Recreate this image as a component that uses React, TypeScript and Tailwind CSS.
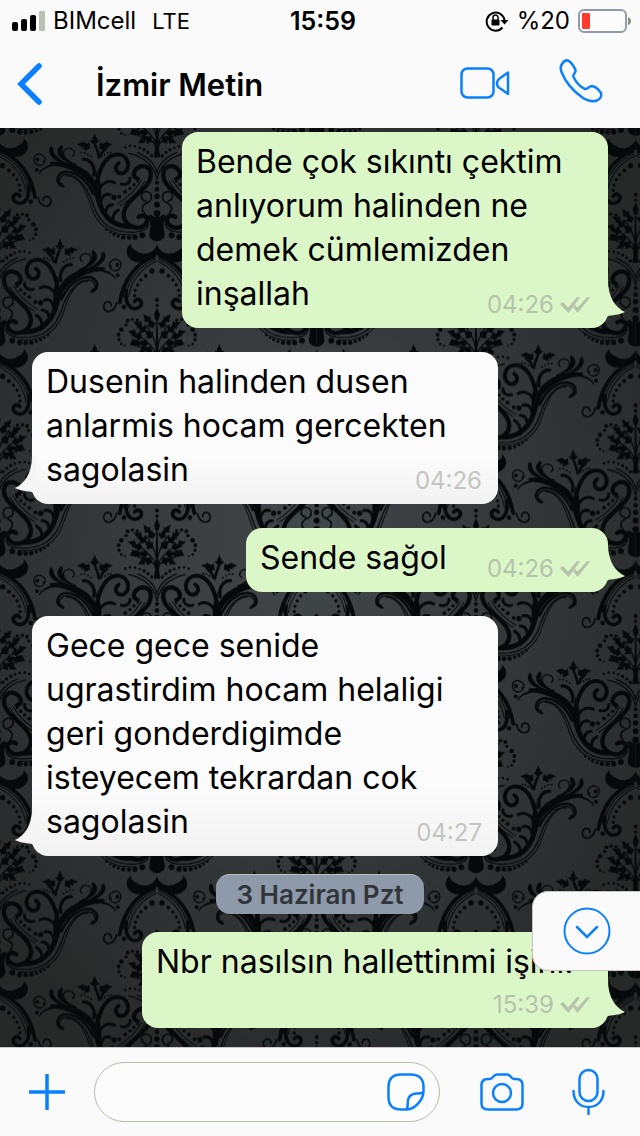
import React from 'react';
import clsx from 'clsx';

interface Message {
  id: number;
  lines: string[];
  time: string;
  mine: boolean;
  size: string;
}

const messages: Message[] = [
  {
    id: 1,
    lines: ['Bende çok sıkıntı çektim', 'anlıyorum halinden ne', 'demek cümlemizden', 'inşallah'],
    time: '04:26',
    mine: true,
    size: 'w-[426px] pb-3',
  },
  {
    id: 2,
    lines: ['Dusenin halinden dusen', 'anlarmis hocam gercekten', 'sagolasin'],
    time: '04:26',
    mine: false,
    size: 'w-[466px] pb-3',
  },
  { id: 3, lines: ['Sende sağol'], time: '04:26', mine: true, size: 'w-[362px] pb-3' },
  {
    id: 4,
    lines: ['Gece gece senide', 'ugrastirdim hocam helaligi', 'geri gonderdigimde', 'isteyecem tekrardan cok', 'sagolasin'],
    time: '04:27',
    mine: false,
    size: 'w-[466px] pb-3',
  },
];

const latest: Message = {
  id: 5,
  lines: ['Nbr nasılsın hallettinmi işini.'],
  time: '15:39',
  mine: true,
  size: 'w-[466px] pb-11',
};

// [x, y, radius] of the beads on the left half of the damask motif
const beads = [
  [376, 82, 4], [390, 78, 4], [405, 79, 4], [419, 83, 4], [432, 89, 5], [444, 97, 5], [455, 107, 5],
  [342, 232, 8], [358, 230, 6], [376, 216, 6], [390, 205, 5], [402, 194, 5], [413, 184, 4],
  [320, 329, 4], [331, 337, 4], [342, 343, 5], [355, 348, 5], [370, 352, 7], [387, 353, 7], [405, 352, 8], [427, 346, 9],
  [111, 150, 6], [112, 118, 6], [372, 561, 7],
  [456, 453, 8], [437, 467, 6], [423, 480, 5], [413, 495, 5], [406, 511, 5], [404, 527, 5],
  [412, 600, 5], [397, 598, 5], [383, 602, 6], [378, 615, 5], [364, 629, 7], [356, 644, 6], [357, 659, 5], [364, 672, 4], [375, 677, 3],
  [244, 98, 3], [254, 99, 3], [264, 103, 3], [273, 109, 3], [314, 104, 3], [323, 99, 3], [332, 97, 3],
];

// [x, y, angle, scale] of the foliage sprigs
const sprigs = [
  [284, 72, 0, 0.9], [268, 84, -58, 0.9], [300, 84, 58, 0.9], [255, 76, -80, 0.7], [314, 76, 80, 0.7],
  [458, 622, -22, 0.9], [447, 604, -38, 0.8], [436, 634, -52, 0.9], [424, 618, -62, 0.8],
  [455, 652, -42, 0.9], [425, 650, -82, 0.9], [407, 640, -75, 0.7], [442, 672, -78, 0.9],
  [420, 668, -108, 0.8], [408, 662, -125, 0.7], [455, 694, -68, 0.9], [434, 690, -120, 0.7],
];

function MotifHalf() {
  return (
    <>
      {beads.map(([x, y, r]) => (
        <circle key={`${x}-${y}`} cx={x} cy={y} r={r} fill="#050909" />
      ))}
      {sprigs.map(([x, y, angle, scale]) => (
        <path
          key={`${x}-${y}`}
          transform={`translate(${x} ${y}) rotate(${angle}) scale(${scale})`}
          fill="#050909"
          d="M0 4C-3 -3 -13 -2 -16 -14C-10 -11 -6 -12 -8 -21C-4 -22 -3 -29 0 -36C3 -29 4 -22 8 -21C6 -12 10 -11 16 -14C13 -2 3 -3 0 4Z"
        />
      ))}
      <g fill="none" stroke="#050909" strokeLinecap="round">
        {/* stems */}
        <path strokeWidth="4" d="M469 706C462 680 440 662 420 650M469 680C462 650 450 630 436 616M466 704C450 690 436 682 420 680" />
        <path strokeWidth="8" d="M297 112C296 98 290 88 286 76M303 108C304 96 312 90 318 86" />
        {/* inner S scroll */}
        <path strokeWidth="13" d="M413 176C392 170 402 143 427 138C456 138 459 170 441 194C420 222 372 246 371 285C373 327 434 336 442 302C443 287 426 283 416 291" />
        <path strokeWidth="3" d="M352 252C378 236 410 208 424 180M360 258C388 240 420 212 434 184" />
        <path strokeWidth="5" d="M438 244C418 238 422 214 440 215C460 218 458 242 442 248C422 258 424 270 434 280" />
        {/* outer scroll */}
        <path strokeWidth="12" d="M286 210C295 160 308 112 345 104C384 98 397 144 371 159C350 165 339 141 356 130" />
        <path strokeWidth="10" d="M282 166C286 138 272 118 250 118" />
        <path strokeWidth="9" d="M297 208C310 184 328 180 344 188M302 252C304 226 318 220 330 224M316 284C317 262 326 254 338 254M338 310C336 288 344 276 355 270M364 192C382 196 392 184 390 174" />
        {/* trunk and its trailing lines */}
        <path strokeWidth="15" d="M276 186C292 208 290 240 308 272C326 304 352 320 392 320" />
        <path strokeWidth="4" d="M188 192C178 194 172 176 190 165C232 157 263 204 278 250C298 312 338 341 410 336C430 334 444 326 446 312" />
        <path strokeWidth="3" d="M200 168C240 168 258 214 272 256C290 318 334 349 408 344" />
        <path strokeWidth="8" d="M190 199C164 194 166 158 200 155C238 158 262 184 280 222" />
        {/* feathered arm */}
        <path strokeWidth="4" d="M216 134C180 130 148 134 122 152M174 137C150 132 134 138 118 160M134 126C142 108 118 96 106 106C96 118 104 138 122 136C132 134 134 128 130 122" />
        <path strokeWidth="4" d="M228 134C190 122 178 90 204 84C222 84 228 100 218 108" />
        {/* fine rays above the stem */}
        <path strokeWidth="4" d="M471 178C463 142 442 112 386 100M471 158C464 130 446 112 412 98" />
        {/* arch */}
        <path strokeWidth="11" d="M462 410C410 428 370 478 359 548" />
        <path strokeWidth="3" d="M466 418C410 440 384 486 378 528M468 424C412 452 392 494 386 530M440 424C400 446 376 490 370 530" />
        <path strokeWidth="11" d="M379 512C372 560 402 578 422 558C430 542 414 532 404 544" />
        <path strokeWidth="5" d="M350 548C342 582 312 580 311 560C313 540 334 542 334 558" />
      </g>
      <g fill="#050909">
        <path d="M150 126C190 118 240 134 268 160C284 176 296 200 300 232L286 226C276 190 240 146 150 134Z" />
        <path d="M152 78C138 102 158 126 212 134C176 118 158 104 160 84Z" />
        <path d="M184 74C160 92 172 120 226 136C196 116 180 100 190 80Z" />
        <path d="M471 372C464 400 430 408 412 394C390 384 388 372 400 368C376 376 372 410 398 422C420 436 450 418 471 404Z" />
        <path d="M471 290H462C448 278 442 284 448 300C458 324 440 342 452 356Q460 364 471 364Z" />
        <path d="M290 150Q312 200 300 250L282 220Z" />
      </g>
    </>
  );
}

function Wallpaper() {
  const copies = [[0, 0], [0, -632], [-478, 316], [-478, -316], [479, 316], [479, -316]];

  return (
    <svg className="absolute inset-0 h-full w-full" aria-hidden="true">
      <defs>
        <radialGradient id="glow" cx="0.48" cy="0.46" r="0.62">
          <stop offset="0" stopColor="#42474a" />
          <stop offset="0.55" stopColor="#343738" />
          <stop offset="1" stopColor="#272929" />
        </radialGradient>
        <g id="half">
          <MotifHalf />
        </g>
        <g id="motif">
          <use href="#half" />
          <use href="#half" transform="translate(942 0) scale(-1 1)" />
          <g fill="#050909">
            <circle cx="471" cy="188" r="6" />
            <circle cx="471" cy="208" r="7" />
            <circle cx="471" cy="229" r="8" />
            <circle cx="471" cy="254" r="9" />
            <circle cx="471" cy="280" r="10" />
            <circle cx="471" cy="540" r="6" />
            <circle cx="471" cy="556" r="5" />
            <path d="M471 562L480 584L476 600H466L462 584Z" />
            <path d="M469 600H473L475 690L480 700L477 718L481 744H461L465 718L462 700L467 690Z" />
          </g>
        </g>
        <pattern id="damask" width="957" height="632" patternUnits="userSpaceOnUse" patternTransform="translate(0 -8) scale(0.3333)">
          {copies.map(([x, y]) => (
            <use key={`${x}/${y}`} href="#motif" x={x} y={y} />
          ))}
        </pattern>
      </defs>
      <rect width="100%" height="100%" fill="url(#glow)" />
      <rect width="100%" height="100%" fill="url(#damask)" />
    </svg>
  );
}

function Bubble({ message }: { message: Message }) {
  const { lines, time, mine, size } = message;

  return (
    <div
      className={clsx(
        'relative rounded-2xl px-[14px] pt-2',
        size,
        mine ? 'self-end bg-[#dcf7c7]' : 'self-start bg-linear-to-b from-[#fbfbfb] from-70% to-[#f2f2f2]'
      )}
    >
      {lines.map((line) => (
        <p key={line} className="w-fit whitespace-nowrap text-[32px] leading-[44px] text-black">
          {line}
        </p>
      ))}
      <div className={clsx('absolute bottom-2 flex items-center gap-[6px]', mine ? 'right-[18px] text-[#b6c3ac]' : 'right-4 text-[#c3c6c0]')}>
        <time className="text-2xl leading-[30px]">{time}</time>
        {mine && (
          <svg className="h-[18px] w-[30px]" viewBox="0 0 30 18" fill="currentColor" aria-label="Okundu">
            <path d="M0 8L3 6L8 11.500L17 1L20 1.500L8.500 17Z" />
            <path d="M13 11L15 9L17.500 11.500L27 1L30 1.500L17.500 17Z" />
          </svg>
        )}
      </div>
      <svg
        className={clsx('absolute bottom-2 h-10 w-[22px]', mine ? '-right-[18px]' : '-left-[18px] -scale-x-100')}
        viewBox="0 0 22 40"
        fill={mine ? '#dcf7c7' : '#f5f5f5'}
        aria-hidden="true"
      >
        <path d="M0 0H4C4 18 12 28 21 32C17 34 12 35 4 36L2 38L0 36Z" />
      </svg>
    </div>
  );
}

function StatusBar() {
  return (
    <div className="grid h-10 grid-cols-[1fr_auto_1fr] items-center pl-[14px] pr-2 pt-[1px] text-2xl leading-10">
      <div className="-ml-[2px] flex items-center gap-2">
        <svg className="h-5 w-[33px]" viewBox="0 0 33 20" aria-hidden="true">
          <rect y="11" width="6" height="9" rx="2" />
          <rect x="9" y="8" width="6" height="12" rx="2" />
          <rect x="18" y="4" width="6" height="16" rx="2" />
          <rect x="27" width="6" height="20" rx="1" fill="#b9c0b4" />
        </svg>
        <span>BIMcell</span>
        <span className="ml-2 text-[22px]">LTE</span>
      </div>
      <time className="text-[25px] font-semibold">15:59</time>
      <div className="flex items-center justify-end gap-2">
        <svg className="h-[22px] w-6" viewBox="0 0 24 22" aria-hidden="true">
          <path d="M17.500 17.500A9 9 0 1 1 19.500 10" fill="none" stroke="black" strokeWidth="2" />
          <path d="M15.500 10H23.500L19.500 14.500Z" />
          <rect x="6.500" y="9.500" width="8" height="6" rx="1" />
          <path d="M8 10V7.500A2.500 2.500 0 0 1 13 7.500V10" fill="none" stroke="black" strokeWidth="1.500" />
        </svg>
        <span>%20</span>
        <svg className="h-6 w-[54px]" viewBox="0 0 54 24" aria-hidden="true">
          <rect x="1" y="1" width="47" height="22" rx="5" fill="#fcfcfc" stroke="#949aa5" strokeWidth="2" />
          <rect x="4" y="4" width="8" height="16" rx="1" fill="#ff3b30" />
          <path d="M50 8Q53 9 53 12T50 16Z" fill="#8b9080" />
        </svg>
      </div>
    </div>
  );
}

export default function App() {
  return (
    <div className="flex min-h-screen flex-col overflow-hidden bg-[#fafafa] font-[Inter,'Liberation_Sans',sans-serif] text-black">
      <header className="h-32">
        <StatusBar />
        <nav className="flex h-[88px] items-center pl-[17px] pr-[37px] pt-[2px] text-[#0a80ff]">
          <button type="button" aria-label="Geri" className="pb-[2px]">
            <svg className="h-11 w-[26px]" viewBox="0 0 26 44" fill="none" stroke="currentColor" strokeWidth="5.500" strokeLinecap="round">
              <path d="M22 4L4 22L22 40" />
            </svg>
          </button>
          <h1 className="ml-[53px] flex-1 text-[31px] font-semibold leading-[36px] text-black">İzmir Metin</h1>
          <button type="button" aria-label="Görüntülü ara" className="pb-1">
            <svg className="h-8 w-[50px]" viewBox="0 0 50 32" fill="none" stroke="currentColor" strokeWidth="2.500">
              <rect x="1.500" y="1.500" width="32" height="29" rx="6" />
              <path strokeLinejoin="round" d="M48 5.500V27L41 22Q37 20 37 16.500T41 10.500Z" />
            </svg>
          </button>
          <button type="button" aria-label="Sesli ara" className="ml-[49px] pb-2">
            <svg className="h-11 w-11" viewBox="0 0 44 44" fill="none" stroke="currentColor" strokeWidth="2.500" strokeLinejoin="round">
              <path d="M3 5C5 2 7 1 9 1.500C11 2 15 7 16.500 11C17 14 13.500 15 14.500 18C17 23 21 28 26 30C29 30.500 30 27 33 27C36 27.500 40 31 42 34C43 37 41 40 38 41.500C34 43 29 42 24 39C14 32 6 22 2.500 13C1 9 2 6.500 3 5Z" />
            </svg>
          </button>
        </nav>
      </header>

      <main className="relative flex-1 overflow-hidden bg-[#2b2d2e]">
        <Wallpaper />
        <div className="relative flex flex-col gap-6 px-8 pb-[19px] pt-1">
          {messages.map((message) => (
            <Bubble key={message.id} message={message} />
          ))}
          <div className="-my-[6px] flex h-10 w-52 items-center justify-center self-center rounded-[14px] border-t border-[#b9c1c9] bg-[#8e99a9] text-[26px] font-semibold text-[#30353a]">
            3 Haziran Pzt
          </div>
          <Bubble message={latest} />
        </div>

        <button
          type="button"
          aria-label="En alta in"
          className="absolute bottom-[76px] right-0 flex h-20 w-[108px] items-center justify-center rounded-l-2xl border border-r-0 border-[#c4c4c4] bg-[#fafafa] text-[#0a80ff]"
        >
          <svg className="h-12 w-12" viewBox="0 0 48 48" fill="none" stroke="currentColor" strokeWidth="2">
            <circle cx="24" cy="24" r="22.500" />
            <path strokeWidth="2.500" strokeLinecap="round" d="M14 20L24 30L34 20" />
          </svg>
        </button>
      </main>

      <footer className="flex h-[89px] items-center border-t border-[#c8c8c8] pl-[29px] pr-[35px] text-[#0a80ff]">
        <button type="button" aria-label="Ekle">
          <svg className="h-9 w-9" viewBox="0 0 36 36" stroke="currentColor" strokeWidth="3.500">
            <path d="M18 0V36M0 18H36" />
          </svg>
        </button>
        <div className="ml-[29px] flex h-[60px] min-w-0 flex-1 items-center rounded-full border border-[#b4bdab] bg-[#fcfcfc] pl-6 pr-[14px]">
          <input type="text" aria-label="Mesaj" className="min-w-0 flex-1 bg-transparent text-[32px] text-black outline-none" />
          <button type="button" aria-label="Çıkartma">
            <svg className="h-[38px] w-[38px]" viewBox="0 0 38 38" fill="none" stroke="currentColor" strokeWidth="2.500" strokeLinejoin="round">
              <path d="M20 36.500H14C5 36.500 1.500 32 1.500 24V14C1.500 5 6 1.500 14 1.500H24C32 1.500 36.500 6 36.500 14V18C36.500 27 28 36 20 36.500Z" />
              <path d="M20 36C21 33 20.500 30 21 27C22 22 25 21 29 20.500C32 20.500 34.500 20.500 36 19.500" />
            </svg>
          </button>
        </div>
        <button type="button" aria-label="Kamera" className="ml-10">
          <svg className="h-[38px] w-11" viewBox="0 0 44 38" fill="none" stroke="currentColor" strokeWidth="2.500" strokeLinejoin="round">
            <path d="M8 6H10C13 6 13 1.500 17 1.500H27C31 1.500 31 6 34 6H36Q42.500 6 42.500 12V30.500Q42.500 36.500 36 36.500H8Q1.500 36.500 1.500 30.500V12Q1.500 6 8 6Z" />
            <circle cx="22" cy="20" r="9" />
          </svg>
        </button>
        <button type="button" aria-label="Ses kaydet" className="ml-12">
          <svg className="h-12 w-[33px]" viewBox="0 0 33 48" fill="none" stroke="currentColor" strokeWidth="2.500" strokeLinecap="round">
            <rect x="7.500" y="2" width="18" height="31" rx="9" />
            <path d="M1.500 23C1.500 33 8 39 16.500 39S31.500 33 31.500 23M16.500 39V46" />
          </svg>
        </button>
      </footer>
    </div>
  );
}
